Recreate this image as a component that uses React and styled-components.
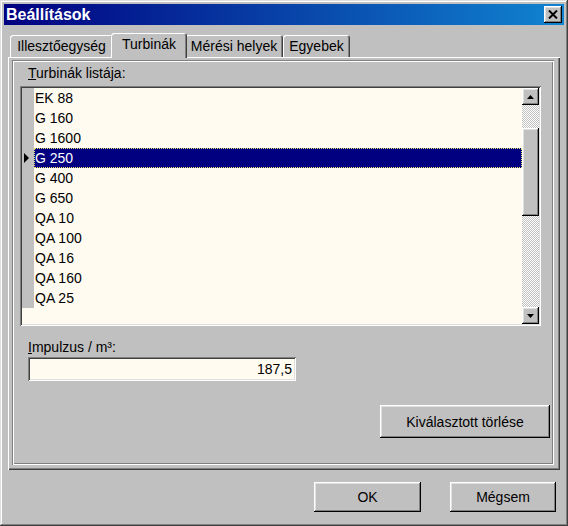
import React from 'react';
import styled, { createGlobalStyle } from 'styled-components';

const GlobalStyle = createGlobalStyle`
  html, body {
    margin: 0;
    padding: 0;
    background: #c0c0c0;
  }
  body {
    font-family: "Liberation Sans", Arial, sans-serif;
    font-size: 14px;
    color: #000;
  }
`;

const turbines = ['EK 88', 'G 160', 'G 1600', 'G 250', 'G 400', 'G 650', 'QA 10', 'QA 100', 'QA 16', 'QA 160', 'QA 25'];

const tabs = [
    { label: 'Illesztőegység', width: 103 },
    { label: 'Turbinák', width: 72 },
    { label: 'Mérési helyek', width: 98 },
    { label: 'Egyebek', width: 67 },
];

const raised = `
    box-shadow: inset -1px -1px #000, inset 1px 1px #fff,
        inset -2px -2px #808080, inset 2px 2px #dfdfdf;
`;

const sunken = `
    box-shadow: inset 1px 1px #808080, inset -1px -1px #fff,
        inset 2px 2px #404040, inset -2px -2px #dfdfdf;
`;

const App = () => {
    const [selected, setSelected] = React.useState(3);
    const [activeTab, setActiveTab] = React.useState(1);

    return (
        <>
            <GlobalStyle />
            <Window>
                <TitleBar>
                    <Title>Beállítások</Title>
                    <CloseButton>
                        <svg width="10" height="9" viewBox="0 0 10 9">
                            <path d="M1 0.5 L9 8.5 M9 0.5 L1 8.5" stroke="#000" strokeWidth="2" />
                        </svg>
                    </CloseButton>
                </TitleBar>
                <Content>
                    <TabStrip>
                        {tabs.map((tab, index) => (
                            <Tab
                                key={tab.label}
                                $width={tab.width}
                                $active={index === activeTab}
                                onClick={() => setActiveTab(index)}
                            >
                                {tab.label}
                            </Tab>
                        ))}
                    </TabStrip>
                    <Panel>
                        <Frame>
                            <FieldLabel>
                                <Mnemonic>T</Mnemonic>urbinák listája:
                            </FieldLabel>
                            <ListBox>
                                <Rows>
                                    {turbines.map((name, index) => {
                                        const isSelected = index === selected;
                                        return (
                                            <Row key={name} onMouseDown={() => setSelected(index)}>
                                                <Indicator>
                                                    {isSelected && (
                                                        <svg width="5" height="10" viewBox="0 0 5 10">
                                                            <polygon points="0,0 5,5 0,10" fill="#000" />
                                                        </svg>
                                                    )}
                                                </Indicator>
                                                <Item $selected={isSelected}>{name}</Item>
                                            </Row>
                                        );
                                    })}
                                </Rows>
                                <ScrollBar>
                                    <ScrollButton>
                                        <svg width="7" height="4" viewBox="0 0 7 4">
                                            <polygon points="3.5,0 7,4 0,4" fill="#000" />
                                        </svg>
                                    </ScrollButton>
                                    <Track $size={23} />
                                    <Thumb $size={88} />
                                    <Track $grow />
                                    <ScrollButton>
                                        <svg width="7" height="4" viewBox="0 0 7 4">
                                            <polygon points="0,0 7,0 3.5,4" fill="#000" />
                                        </svg>
                                    </ScrollButton>
                                </ScrollBar>
                            </ListBox>
                            <FieldLabel $gap={13}>
                                <Mnemonic>I</Mnemonic>mpulzus / m³:
                            </FieldLabel>
                            <ValueBox>187,5</ValueBox>
                            <Button $width={170} $height={33} $push>
                                Kiválasztott törlése
                            </Button>
                        </Frame>
                    </Panel>
                    <Footer>
                        <Button $width={107} $height={30}>OK</Button>
                        <Button $width={106} $height={30}>Mégsem</Button>
                    </Footer>
                </Content>
            </Window>
        </>
    );
};

const Window = styled.div`
    width: 568px;
    height: 526px;
    box-sizing: border-box;
    padding: 4px;
    background: #c0c0c0;
    display: flex;
    flex-direction: column;
    box-shadow: inset -1px -1px #404040, inset 1px 1px #dfdfdf,
        inset -2px -2px #808080, inset 2px 2px #fff;
`;

const TitleBar = styled.div`
    height: 21px;
    flex-shrink: 0;
    display: flex;
    align-items: center;
    justify-content: space-between;
    padding-left: 2px;
    background: linear-gradient(to right, #000080, #1084d0);
`;

const Title = styled.span`
    color: #fff;
    font-weight: bold;
    font-size: 16px;
    line-height: 21px;
`;

const CloseButton = styled.div`
    width: 18px;
    height: 17px;
    margin-right: 2px;
    background: #c0c0c0;
    display: flex;
    align-items: center;
    justify-content: center;
    ${raised}
`;

const Content = styled.div`
    flex: 1;
    display: flex;
    flex-direction: column;
    padding: 8px 4px 0;
`;

const TabStrip = styled.div`
    height: 24px;
    display: flex;
    align-items: flex-end;
    padding-left: 2px;
`;

const Tab = styled.div`
    position: relative;
    z-index: ${(p) => (p.$active ? 1 : 0)};
    box-sizing: border-box;
    width: ${(p) => (p.$active ? p.$width + 4 : p.$width)}px;
    height: ${(p) => (p.$active ? 25 : 22)}px;
    margin: ${(p) => (p.$active ? '0 -2px -1px' : '0')};
    padding-top: ${(p) => (p.$active ? 3 : 3)}px;
    text-align: center;
    line-height: 16px;
    background: #c0c0c0;
    border-radius: 3px 3px 0 0;
    box-shadow: inset 1px 1px #fff, inset -1px 0 #404040, inset -2px 0 #808080;
    cursor: default;
`;

const Panel = styled.div`
    width: 552px;
    height: 413px;
    box-sizing: border-box;
    padding: 3px 6px 5px 4px;
    display: flex;
    box-shadow: inset 1px 1px #fff, inset -1px -1px #404040, inset -2px -2px #808080;
`;

const Frame = styled.div`
    flex: 1;
    display: flex;
    flex-direction: column;
    align-items: flex-start;
    padding: 5px 4px 0 8px;
    box-shadow: inset 1px 1px #808080, inset -1px -1px #fff,
        inset 2px 2px #fff, inset -2px -2px #808080;
`;

const FieldLabel = styled.div`
    margin-left: 8px;
    margin-top: ${(p) => p.$gap || 0}px;
    line-height: 16px;
`;

const Mnemonic = styled.span`
    text-decoration: underline;
`;

const ListBox = styled.div`
    margin-top: 5px;
    width: 521px;
    height: 240px;
    box-sizing: border-box;
    padding: 2px;
    display: flex;
    background: #fffbf0;
    ${sunken}
`;

const Rows = styled.div`
    flex: 1;
    display: flex;
    flex-direction: column;
`;

const Row = styled.div`
    display: flex;
    height: 20px;
`;

const Indicator = styled.div`
    width: 12px;
    background: #c0c0c0;
    display: flex;
    align-items: center;
    padding-left: 2px;
    box-sizing: border-box;
`;

const Item = styled.div`
    flex: 1;
    padding-left: 1px;
    line-height: 20px;
    background: ${(p) => (p.$selected ? '#000080' : 'transparent')};
    color: ${(p) => (p.$selected ? '#fff' : '#000')};
    outline: ${(p) => (p.$selected ? '1px dotted #f0e070' : 'none')};
    outline-offset: -1px;
`;

const ScrollBar = styled.div`
    width: 17px;
    display: flex;
    flex-direction: column;
`;

const ScrollButton = styled.div`
    height: 17px;
    flex-shrink: 0;
    display: flex;
    align-items: center;
    justify-content: center;
    background: #c0c0c0;
    ${raised}
`;

const Track = styled.div`
    height: ${(p) => (p.$size ? `${p.$size}px` : 'auto')};
    flex: ${(p) => (p.$grow ? 1 : '0 0 auto')};
    background: repeating-conic-gradient(#c0c0c0 0 25%, #fff 0 50%) 0 0 / 2px 2px;
`;

const Thumb = styled.div`
    height: ${(p) => p.$size}px;
    flex-shrink: 0;
    background: #c0c0c0;
    ${raised}
`;

const ValueBox = styled.div`
    margin: 2px 0 0 8px;
    width: 268px;
    height: 24px;
    box-sizing: border-box;
    padding-right: 4px;
    text-align: right;
    line-height: 24px;
    background: #fffbf0;
    ${sunken}
`;

const Button = styled.div`
    width: ${(p) => p.$width}px;
    height: ${(p) => p.$height}px;
    box-sizing: border-box;
    display: flex;
    align-items: center;
    justify-content: center;
    background: #c0c0c0;
    align-self: ${(p) => (p.$push ? 'flex-end' : 'auto')};
    margin-top: ${(p) => (p.$push ? 24 : 0)}px;
    cursor: default;
    ${raised}
`;

const Footer = styled.div`
    display: flex;
    justify-content: flex-end;
    gap: 29px;
    margin-top: 12px;
    padding-right: 4px;
`;

export default App;
